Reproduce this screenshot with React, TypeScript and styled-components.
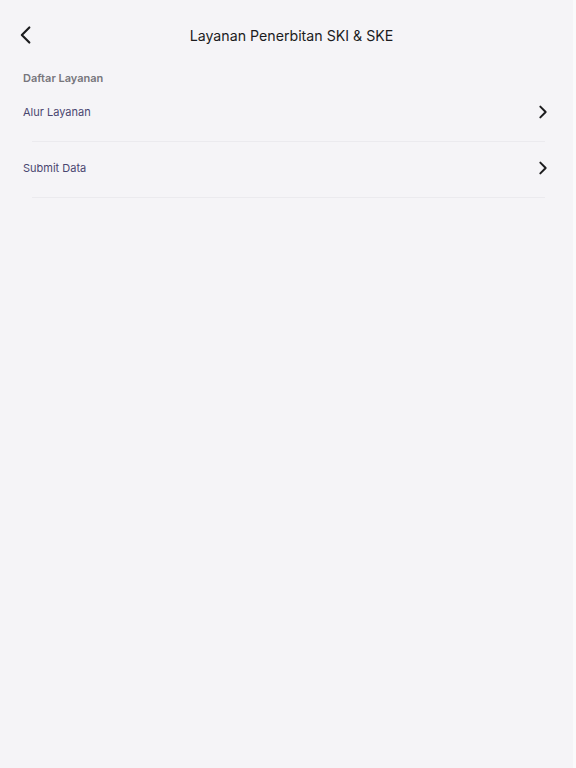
import React from "react";
import styled, { createGlobalStyle } from "styled-components";

const GlobalStyle = createGlobalStyle`
	html, body {
		margin: 0;
		padding: 0;
		background: #f5f4f7;
	}
	body {
		font-family: "Inter", "Noto Sans", sans-serif;
	}
`;

const items = ["Alur Layanan", "Submit Data"];

const Chevron: React.FC<{ dir: "left" | "right"; size: number; stroke: number }> = ({
	dir,
	size,
	stroke,
}) => (
	<svg width={size} height={size} viewBox="0 0 24 24" fill="none">
		<path
			d={dir === "left" ? "M16 3 L7 12 L16 21" : "M8 4 L16 12 L8 20"}
			stroke="#1c1c1e"
			strokeWidth={stroke}
			strokeLinecap="round"
			strokeLinejoin="round"
		/>
	</svg>
);

const App: React.FC = () => {
	return (
		<Page>
			<GlobalStyle />
			<Header>
				<BackButton>
					<Chevron dir="left" size={20} stroke={2.6} />
				</BackButton>
				<Title>Layanan Penerbitan SKI &amp; SKE</Title>
			</Header>
			<Section>
				<SectionLabel>Daftar Layanan</SectionLabel>
				{items.map((item) => (
					<Row key={item}>
						<RowLabel>{item}</RowLabel>
						<Chevron dir="right" size={16} stroke={3} />
					</Row>
				))}
			</Section>
		</Page>
	);
};

export default App;

const Page = styled.div`
	min-height: 768px;
	background: #f5f4f7;
	border-right: 3px solid #fafafb;
	box-sizing: border-box;
`;
const Header = styled.div`
	height: 71px;
	display: flex;
	align-items: center;
	justify-content: center;
	position: relative;
`;
const BackButton = styled.div`
	position: absolute;
	left: 16px;
	top: 25px;
	display: flex;
`;
const Title = styled.div`
	font-size: 14.2px;
	color: #1c1c1e;
	margin-left: 10px;
`;
const Section = styled.div`
	padding: 0 22px 0 23px;
`;
const SectionLabel = styled.div`
	font-size: 11px;
	font-weight: 600;
	color: #77767c;
	height: 15px;
	line-height: 15px;
`;
const Row = styled.div`
	display: flex;
	align-items: center;
	justify-content: space-between;
	height: 56px;
	box-sizing: border-box;
	padding-bottom: 4px;
	position: relative;
	&::after {
		content: "";
		position: absolute;
		left: 9px;
		right: 6px;
		bottom: 0;
		height: 1px;
		background: #ebeaee;
	}
`;
const RowLabel = styled.div`
	font-size: 11px;
	color: #4a4670;
`;
